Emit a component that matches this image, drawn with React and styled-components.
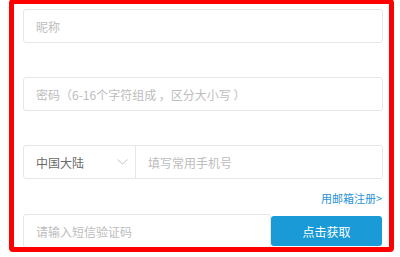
import styled, { createGlobalStyle } from "styled-components";

const GlobalStyle = createGlobalStyle`
  html, body {
    margin: 0;
    padding: 0;
    background: #fff;
    font-family: "Noto Sans CJK SC", "Noto Sans", sans-serif;
  }
  * { box-sizing: border-box; }
`;

const Frame = styled.div`
  margin: -1px 0 0 9px;
  width: 385px;
  height: 253px;
  border: 5px solid #ff0000;
  border-radius: 4px;
  overflow: hidden;
  padding: 5px 6px 0 9px;
`;

const Row = styled.div`
  display: flex;
  align-items: center;
  height: 34px;
  margin-bottom: ${(p) => p.$gap || 0}px;
`;

const Field = styled.input`
  flex: 1;
  min-width: 0;
  height: 34px;
  border: 1px solid #e6e6e6;
  border-radius: 3px;
  padding: 0 12px;
  font-family: inherit;
  font-size: 12px;
  color: #666;
  outline: none;
  background: #fff;
  &::placeholder { color: #bdbdbd; }
`;

const PhoneBox = styled.div`
  flex: 1;
  display: flex;
  align-items: stretch;
  height: 34px;
  border: 1px solid #e6e6e6;
  border-radius: 3px;
`;

const Region = styled.div`
  width: 112px;
  display: flex;
  align-items: center;
  justify-content: space-between;
  padding: 0 7px 0 12px;
  border-right: 1px solid #e6e6e6;
  font-size: 12px;
  color: #6a6a6a;
`;

const PhoneInput = styled(Field)`
  border: none;
  height: auto;
  padding-left: 12px;
`;

const LinkRow = styled.div`
  height: 35px;
  padding: 12px 1px 0 0;
  text-align: right;
  font-size: 11px;
  line-height: 14px;
`;

const MailLink = styled.a`
  color: #2a93d5;
  text-decoration: none;
`;

const CodeField = styled(Field)`
  flex: 0 0 248px;
`;

const GetButton = styled.button`
  width: 111px;
  height: 30px;
  margin-right: 1px;
  border: none;
  border-radius: 3px;
  background: #1a9ad6;
  color: #fff;
  font-family: inherit;
  font-size: 12px;
  cursor: pointer;
`;

const Chevron = () => (
  <svg width="11" height="6" viewBox="0 0 11 6">
    <polyline points="0.5,0.5 5.5,5 10.5,0.5" fill="none" stroke="#c4c4c4" strokeWidth="1" />
  </svg>
);

export default function App() {
  return (
    <>
      <GlobalStyle />
      <Frame>
        <Row $gap={34}>
          <Field placeholder="昵称" />
        </Row>
        <Row $gap={34}>
          <Field type="password" placeholder="密码（6-16个字符组成 ，区分大小写 ）" />
        </Row>
        <Row>
          <PhoneBox>
            <Region>
              中国大陆
              <Chevron />
            </Region>
            <PhoneInput placeholder="填写常用手机号" />
          </PhoneBox>
        </Row>
        <LinkRow>
          <MailLink href="#">用邮箱注册&gt;</MailLink>
        </LinkRow>
        <Row>
          <CodeField placeholder="请输入短信验证码" />
          <GetButton>点击获取</GetButton>
        </Row>
      </Frame>
    </>
  );
}
